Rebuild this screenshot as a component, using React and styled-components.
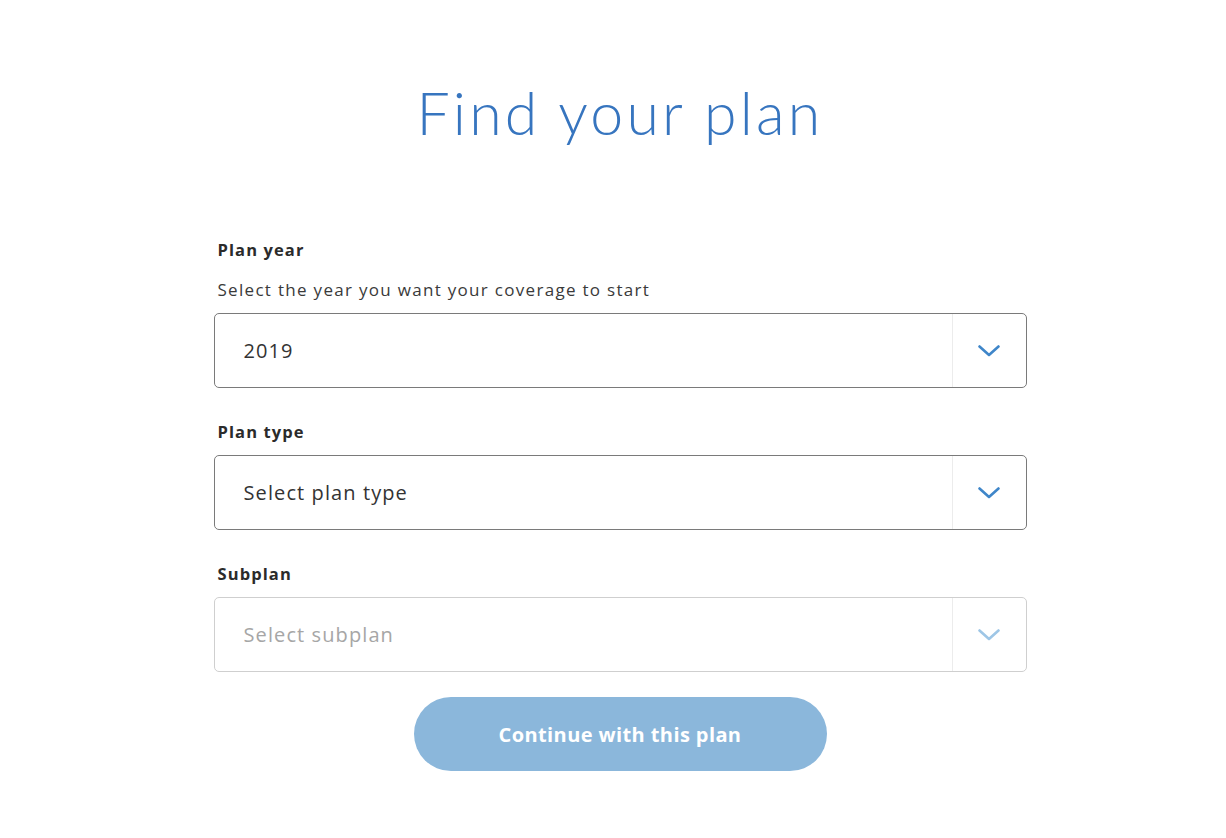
import React from 'react';
import styled, { createGlobalStyle } from 'styled-components';

const GlobalStyle = createGlobalStyle`
  html, body {
    margin: 0;
    padding: 0;
    background: #fff;
  }
  body {
    font-family: "Open Sans", Lato, Arial, sans-serif;
    color: #333;
  }
`;

const Page = styled.div`
  padding: 77px 0 60px 14px;
  display: flex;
  flex-direction: column;
  align-items: center;
`;

const Title = styled.h1`
  margin: 0;
  font-family: Lato, "Open Sans", sans-serif;
  font-weight: 300;
  font-size: 59px;
  line-height: 72px;
  letter-spacing: 3.2px;
  color: #3775bf;
`;

const Form = styled.form`
  width: 813px;
  margin-top: 91px;
  display: flex;
  flex-direction: column;
`;

const Field = styled.div`
  display: flex;
  flex-direction: column;
  margin-bottom: 34px;
`;

const Label = styled.label`
  font-size: 16.5px;
  font-weight: 700;
  line-height: 20px;
  letter-spacing: 1.1px;
  color: #2b2b2b;
  padding-left: 4px;
`;

const Hint = styled.div`
  margin-top: 20px;
  font-size: 17px;
  line-height: 20px;
  letter-spacing: 1.3px;
  color: #3a3a3a;
  padding-left: 4px;
`;

const SelectBox = styled.div`
  margin-top: 13px;
  height: 75px;
  box-sizing: border-box;
  display: flex;
  align-items: stretch;
  border: 1px solid ${(p) => (p.$disabled ? '#cfcfcf' : '#7a7a7a')};
  border-radius: 5px;
  background: #fff;
`;

const Value = styled.div`
  flex: 1;
  display: flex;
  align-items: center;
  padding-left: 29px;
  font-size: 20px;
  letter-spacing: 1.1px;
  color: ${(p) => (p.$muted ? '#a6a6a6' : '#333')};
`;

const ArrowCell = styled.div`
  width: 73px;
  border-left: 1px solid #ececec;
  display: flex;
  align-items: center;
  justify-content: center;
  color: ${(p) => (p.$disabled ? '#9ec6e6' : '#3f86c9')};
`;

const Button = styled.button`
  align-self: center;
  margin-top: -9px;
  width: 413px;
  height: 74px;
  border: none;
  border-radius: 37px;
  background: #8bb7db;
  color: #fff;
  font-family: "Open Sans", Lato, sans-serif;
  font-size: 20px;
  font-weight: 700;
  letter-spacing: 0.4px;
  cursor: default;
`;

const Chevron = () => (
  <svg width="22" height="12" viewBox="0 0 22 12" fill="none">
    <path d="M1.5 1.5 L11 10 L20.5 1.5" stroke="currentColor" strokeWidth="2.6" strokeLinecap="round" strokeLinejoin="round" />
  </svg>
);

const Select = ({ value, muted, disabled }) => (
  <SelectBox $disabled={disabled}>
    <Value $muted={muted}>{value}</Value>
    <ArrowCell $disabled={disabled}>
      <Chevron />
    </ArrowCell>
  </SelectBox>
);

export default function App() {
  return (
    <>
      <GlobalStyle />
      <Page>
        <Title>Find your plan</Title>
        <Form onSubmit={(e) => e.preventDefault()}>
          <Field>
            <Label>Plan year</Label>
            <Hint>Select the year you want your coverage to start</Hint>
            <Select value="2019" />
          </Field>
          <Field>
            <Label>Plan type</Label>
            <Select value="Select plan type" />
          </Field>
          <Field>
            <Label>Subplan</Label>
            <Select value="Select subplan" muted disabled />
          </Field>
          <Button type="button">Continue with this plan</Button>
        </Form>
      </Page>
    </>
  );
}
